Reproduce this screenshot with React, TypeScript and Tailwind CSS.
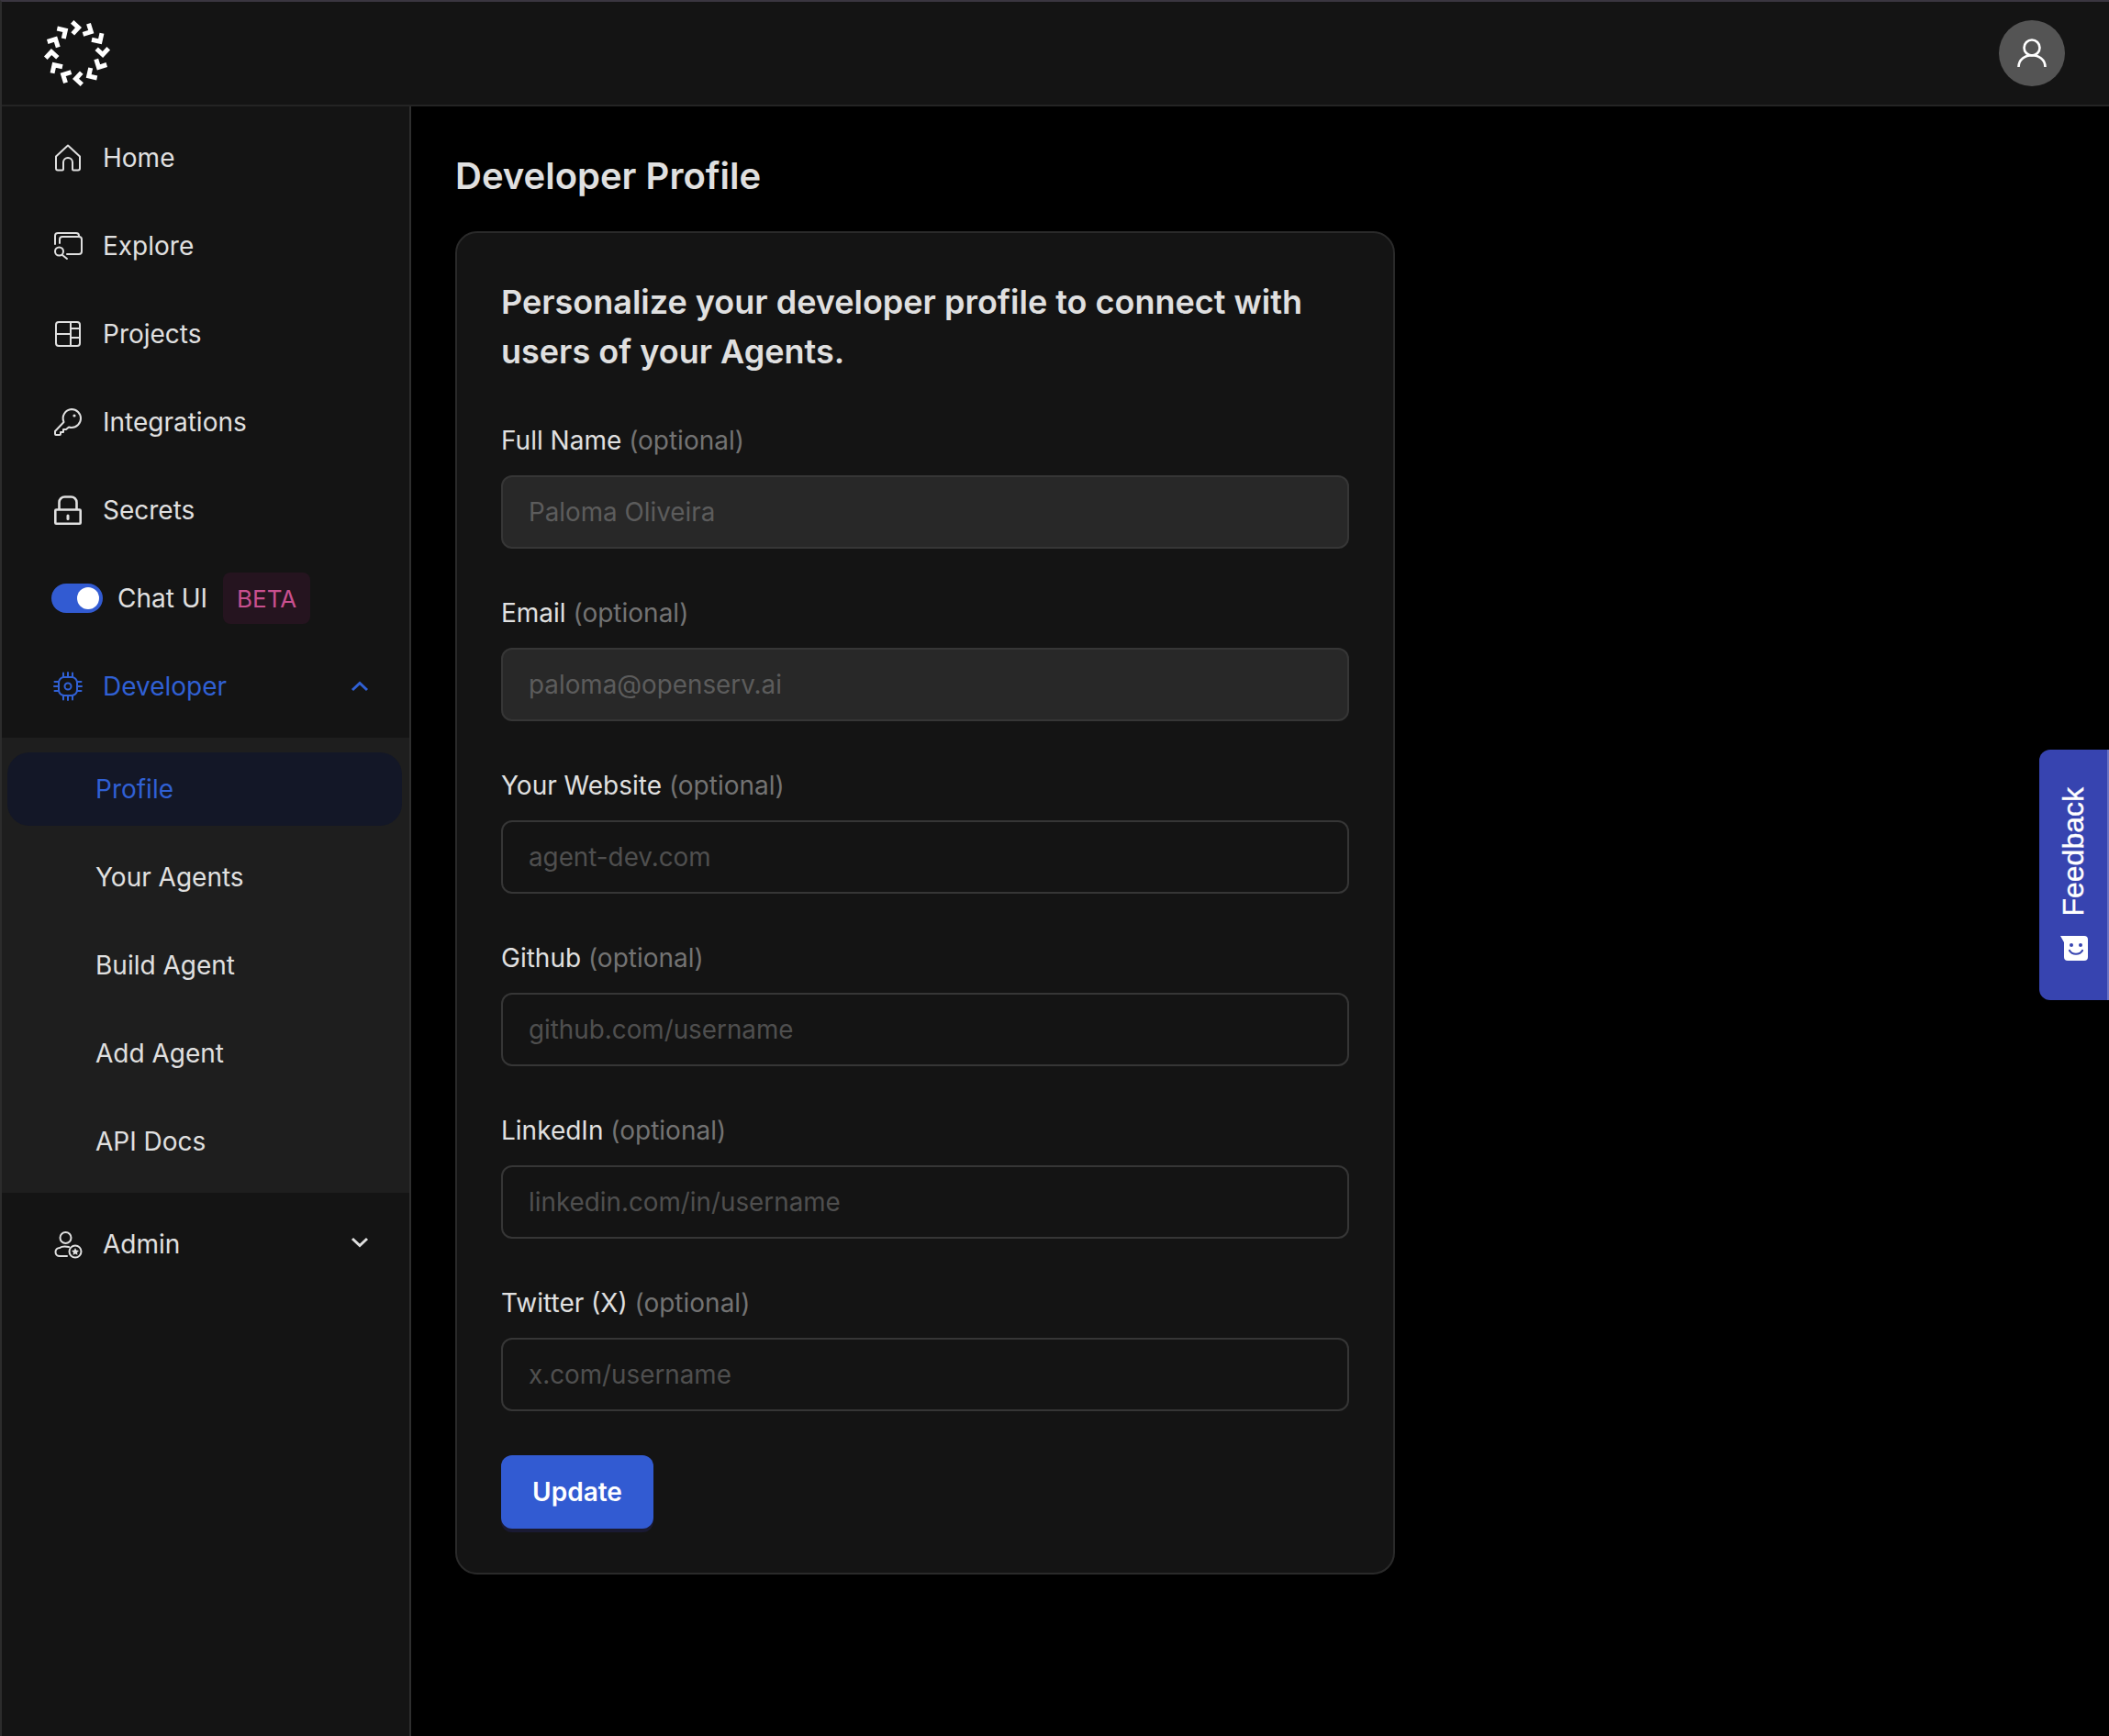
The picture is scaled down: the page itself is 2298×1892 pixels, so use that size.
import { ReactNode } from "react";

const iconClass = "w-[32px] h-[32px] shrink-0";

const HomeIcon = () => (
  <svg viewBox="0 0 32 32" fill="none" stroke="currentColor" strokeWidth="2" strokeLinejoin="round" className={iconClass}>
    <path d="M3 14.5 L16 2.5 L29 14.5 V27.5 a2 2 0 0 1 -2 2 H22 a1 1 0 0 1 -1 -1 V21 a5 5 0 0 0 -10 0 V28.5 a1 1 0 0 1 -1 1 H5 a2 2 0 0 1 -2 -2 Z" />
  </svg>
);

const ExploreIcon = () => (
  <svg viewBox="0 0 32 32" fill="none" stroke="currentColor" strokeWidth="2" strokeLinecap="round" className={iconClass}>
    <path d="M2 14 V5 a3 3 0 0 1 3 -3 H25 a3 3 0 0 1 3 3" />
    <path d="M7 13 V9 a3 3 0 0 1 3 -3 H28 a3 3 0 0 1 3 3 V22 a3 3 0 0 1 -3 3 H15" />
    <circle cx="6.5" cy="22" r="4.5" />
    <path d="M10 26 L15 30" />
  </svg>
);

const ProjectsIcon = () => (
  <svg viewBox="0 0 32 32" fill="none" stroke="currentColor" strokeWidth="2" className={iconClass}>
    <rect x="3" y="3" width="26" height="26" rx="3" />
    <path d="M3 16 H19 M19 3 V29 M19 10 H29 M19 20 H29" />
  </svg>
);

const KeyIcon = () => (
  <svg viewBox="0 0 32 32" fill="none" stroke="currentColor" strokeWidth="2" strokeLinejoin="round" className={iconClass}>
    <path d="M20 2 a10 10 0 0 1 0 20 a10 10 0 0 1 -3 -.5 L14 24 H11 V27 H8 V29 a1 1 0 0 1 -1 1 H3 a1 1 0 0 1 -1 -1 V26 L11.5 16 A10 10 0 0 1 20 2 Z" />
    <circle cx="23" cy="9" r="1.6" fill="currentColor" stroke="none" />
  </svg>
);

const LockIcon = () => (
  <svg viewBox="0 0 32 32" fill="none" stroke="currentColor" strokeWidth="2.6" className={iconClass}>
    <rect x="2.3" y="15.5" width="27.4" height="15.2" rx="1" />
    <path d="M6.5 15 V7.5 a6 6 0 0 1 6 -6 H19.5 a6 6 0 0 1 6 6 V15" />
    <path d="M16 22 V25.5" strokeWidth="3" strokeLinecap="round" />
  </svg>
);

const ChipIcon = () => (
  <svg viewBox="0 0 32 32" fill="none" stroke="currentColor" strokeWidth="2" strokeLinecap="round" className={iconClass}>
    <rect x="6" y="6" width="20" height="20" rx="6" />
    <circle cx="16" cy="16" r="3.5" />
    <path d="M11 1.5 V6 M16 1 V6 M21 1.5 V6 M11 26 V30.5 M16 26 V31 M21 26 V30.5 M1.5 11 H6 M1 16 H6 M1.5 21 H6 M26 11 H30.5 M26 16 H31 M26 21 H30.5" />
  </svg>
);

const AdminIcon = () => (
  <svg viewBox="0 0 32 32" fill="none" stroke="currentColor" strokeWidth="2" strokeLinecap="round" className={iconClass}>
    <circle cx="13.5" cy="9" r="6" />
    <path d="M15 29 H7 a4.5 4.5 0 0 1 0 -9 C9 18.5 14 18.5 17 19" />
    <circle cx="24" cy="24" r="6.5" />
    <path d="M24 20 L25.2 22.6 L28 23 L26 25 L26.5 27.8 L24 26.5 L21.5 27.8 L22 25 L20 23 L22.8 22.6 Z" fill="currentColor" stroke="none" />
  </svg>
);

const Chevron = ({ up }: { up?: boolean }) => (
  <svg viewBox="0 0 20 14" fill="none" stroke="currentColor" strokeWidth="3" className={`w-[20px] h-[14px] ${up ? "" : "-translate-y-[2px]"}`}>
    <path d={up ? "M2 11 L10 3.5 L18 11" : "M2 3 L10 10.5 L18 3"} />
  </svg>
);

const Logo = () => (
  <svg viewBox="0 0 80 80" className="w-[80px] h-[80px]">
    {Array.from({ length: 12 }).map((_, i) => (
      <g key={i} transform={`rotate(${i * 30 + 2} 40 40)`}>
        <path d="M33.5 6 L40.5 12 L34.5 19" fill="none" stroke="#fff" strokeWidth="5" />
      </g>
    ))}
  </svg>
);

const NavRow = ({ icon, label, active, children }: { icon: ReactNode; label: string; active?: boolean; children?: ReactNode }) => (
  <div className={`h-[96px] flex items-center pl-[56px] pr-[44px] ${active ? "text-[#3060d4]" : "text-[#e0e0e0]"}`}>
    {icon}
    <span className="ml-[22px] text-[28px] leading-[44px]">{label}</span>
    {children}
  </div>
);

const Field = ({ label, placeholder, value }: { label: string; placeholder?: string; value?: string }) => (
  <div className="flex flex-col">
    <label className="h-[40px] text-[28px] leading-[40px] text-[#e0e0e0] mb-[18px]">
      {label} <span className="text-[#737373]">(optional)</span>
    </label>
    <input
      readOnly
      value={value ?? ""}
      placeholder={placeholder}
      className={`h-[80px] w-full rounded-[12px] border-2 border-[#363636] px-[28px] text-[27.8px] outline-none placeholder:text-[#4f4f4f] ${
        value ? "bg-[#282828] text-[#5c5c5c]" : "bg-transparent"
      }`}
    />
  </div>
);

export default function App() {
  return (
    <div className="relative h-[1892px] w-[2298px] overflow-hidden bg-black font-['Inter',sans-serif] border-l-2 border-l-[#2c2c2c] border-t-2 border-t-[#3a3640]">
      <header className="h-[114px] bg-[#141414] border-b-2 border-[#242424] flex items-center justify-between pl-[42px] pr-[48px]">
        <Logo />
        <div className="w-[72px] h-[72px] rounded-full bg-[#545454] flex items-center justify-center">
          <svg viewBox="0 0 32 32" fill="none" stroke="#fff" strokeWidth="2.6" className="w-[32px] h-[32px]">
            <circle cx="16" cy="10" r="8.5" />
            <path d="M1.5 31 C1.5 14 30.5 14 30.5 31" />
          </svg>
        </div>
      </header>
      <div className="flex h-[1776px]">
        <aside className="w-[446px] bg-[#141414] border-r-2 border-[#2e2e2e] pt-[8px] flex flex-col">
          <NavRow icon={<HomeIcon />} label="Home" />
          <NavRow icon={<ExploreIcon />} label="Explore" />
          <NavRow icon={<ProjectsIcon />} label="Projects" />
          <NavRow icon={<KeyIcon />} label="Integrations" />
          <NavRow icon={<LockIcon />} label="Secrets" />
          <div className="h-[96px] flex items-center pl-[54px] text-[#e0e0e0]">
            <div className="w-[56px] h-[32px] rounded-full bg-[#325bd2] flex items-center justify-end pr-[4px]">
              <div className="w-[24px] h-[24px] rounded-full bg-white" />
            </div>
            <span className="ml-[16px] text-[28px] leading-[44px]">Chat UI</span>
            <span className="ml-[17px] h-[56px] w-[95px] flex items-center justify-center rounded-[8px] bg-[#25141f] text-[#c9508f] text-[26px]">BETA</span>
          </div>
          <NavRow icon={<ChipIcon />} label="Developer" active>
            <span className="ml-auto"><Chevron up /></span>
          </NavRow>
          <div className="mt-[8px] bg-[#1e1e1e] py-[16px] px-[6px] flex flex-col gap-[16px] text-[28px] text-[#e0e0e0] mr-0">
            <div className="h-[80px] w-[430px] rounded-[24px] bg-[#131727] flex items-center pl-[96px] text-[#3060d4]">Profile</div>
            <div className="h-[80px] flex items-center pl-[96px]">Your Agents</div>
            <div className="h-[80px] flex items-center pl-[96px]">Build Agent</div>
            <div className="h-[80px] flex items-center pl-[96px]">Add Agent</div>
            <div className="h-[80px] flex items-center pl-[96px]">API Docs</div>
          </div>
          <div className="mt-[8px]">
            <NavRow icon={<AdminIcon />} label="Admin">
              <span className="ml-auto"><Chevron /></span>
            </NavRow>
          </div>
        </aside>
        <main className="flex-1 pl-[48px]">
          <h1 className="mt-[46px] mb-[30px] h-[60px] text-[40px] leading-[60px] font-semibold text-[#e0e0e0]">Developer Profile</h1>
          <section className="w-[1024px] rounded-[24px] border-2 border-[#2a2a2a] bg-[#141414] p-[48px]">
            <h2 className="text-[36px] leading-[54px] font-semibold text-[#e0e0e0] mb-[50px]">
              Personalize your developer profile to connect with users of your Agents.
            </h2>
            <div className="flex flex-col gap-[50px]">
              <Field label="Full Name" value="Paloma Oliveira" />
              <Field label="Email" value="paloma@openserv.ai" />
              <Field label="Your Website" placeholder="agent-dev.com" />
              <Field label="Github" placeholder="github.com/username" />
              <Field label="LinkedIn" placeholder="linkedin.com/in/username" />
              <Field label="Twitter (X)" placeholder="x.com/username" />
            </div>
            <button className="mt-[48px] block h-[80px] w-[166px] rounded-[12px] bg-[#325bd2] text-[28px] font-semibold text-white shadow-[0_4px_0_#1a1a33]">
              Update
            </button>
          </section>
        </main>
      </div>
      <div className="absolute right-0 top-[815px] w-[76px] h-[273px] rounded-l-[12px] bg-[#3744b0] border-r-2 border-r-[#6a74c4] flex flex-col items-center justify-end pb-[41px] gap-[20px] text-white">
        <span className="[writing-mode:vertical-rl] rotate-180 font-['Liberation_Sans',sans-serif] text-[32px] leading-none [-webkit-text-stroke:0.4px_white]">Feedback</span>
        <svg viewBox="0 0 32 30" className="w-[32px] h-[30px] translate-x-[2px]">
          <path d="M0 1 L26 1 a4 4 0 0 1 4 4 V24 a4 4 0 0 1 -4 4 H8 a4 4 0 0 1 -4 -4 V8 Z" fill="#fff" />
          <circle cx="12" cy="11" r="2" fill="#3744b0" />
          <circle cx="22" cy="11" r="2" fill="#3744b0" />
          <path d="M10 17 C13 22 21 22 24 17" fill="none" stroke="#3744b0" strokeWidth="2.2" strokeLinecap="round" />
        </svg>
      </div>
    </div>
  );
}
